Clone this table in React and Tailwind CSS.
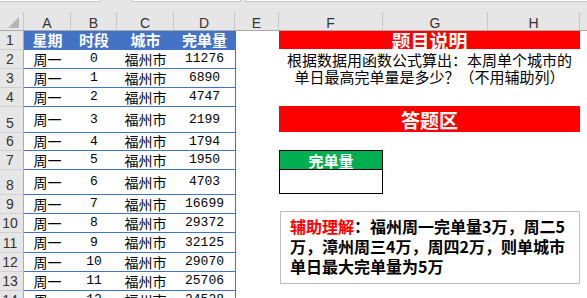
import React from 'react';

const cjk = "font-['Noto_Sans_CJK_SC',sans-serif]";

const rows = [
  ['0', '11276'],
  ['1', '6890'],
  ['2', '4747'],
  ['3', '2199'],
  ['4', '1794'],
  ['5', '1950'],
  ['6', '4703'],
  ['7', '16699'],
  ['8', '29372'],
  ['9', '32125'],
  ['10', '29070'],
  ['11', '25706'],
  ['12', '24528'],
];

// row heights for rows 2..14 (row 1 is the blue header)
const heights = ['h-[19px]', 'h-[19px]', 'h-[19px]', 'h-[26px]', 'h-[18px]', 'h-[19px]', 'h-[25px]', 'h-[19px]', 'h-[19px]', 'h-[20px]', 'h-[19px]', 'h-[19px]', 'h-[19px]'];

const cols = [
  { label: 'A', w: 'w-[47px]' },
  { label: 'B', w: 'w-[46px]' },
  { label: 'C', w: 'w-[57px]' },
  { label: 'D', w: 'w-[61px]' },
  { label: 'E', w: 'w-[44px]' },
  { label: 'F', w: 'w-[104px]' },
  { label: 'G', w: 'w-[105px]' },
  { label: 'H', w: 'w-[92px]' },
];

const ColHead = ({ label, w }) => (
  <div className={`${w} flex items-end`}>
    <div className="flex-1 text-center text-[14px] leading-[14px] text-[#333]">{label}</div>
    <div className="w-px h-[18px] bg-[#c9c9c9]"></div>
  </div>
);

const RowNum = ({ n, h, first }) => (
  <div className={`w-[24px] ${h} flex items-end justify-center pb-[2px] pr-[3px] bg-[#e6e6e6] border-r border-[#ababab] ${first ? '' : 'border-t border-t-[#cfcfcf]'} text-[14px] leading-[14px] text-[#333]`}>
    {n}
  </div>
);

export default function App() {
  return (
    <div className="w-[587px] h-[298px] overflow-hidden bg-white font-['Liberation_Sans',sans-serif]">
      {/* toolbar strip */}
      <div className="h-[4px] bg-[#e6e6e6] flex">
        <div className="w-[101px] h-[2px] bg-white border-r border-b border-[#c6c6c6]"></div>
        <div className="w-[31px]"></div>
        <div className="w-[109px] h-[2px] bg-white border-x border-b border-[#c6c6c6]"></div>
        <div className="w-[4px]"></div>
        <div className="flex-1 h-[2px] bg-white border-l border-b border-[#c6c6c6]"></div>
      </div>

      {/* column header */}
      <div className="h-[27px] flex bg-[#e6e6e6] border-b border-[#ababab]">
        <div className="w-[24px] flex items-end">
          <div className="flex-1 h-full flex items-end justify-end pr-[4px] pb-[2px]">
            <svg width="11" height="11" viewBox="0 0 11 11">
              <polygon points="11,0 11,11 0,11" fill="#b4b4b4" />
            </svg>
          </div>
          <div className="w-px h-[18px] bg-[#c9c9c9]"></div>
        </div>
        {cols.map((c) => (
          <ColHead key={c.label} {...c} />
        ))}
      </div>

      <div className="flex">
        {/* data table */}
        <div className="flex flex-col">
          <div className="flex h-[18px]">
            <RowNum n="1" h="h-[18px]" first />
            <div className={`flex bg-[#4472c4] text-white font-bold text-[15px] ${cjk}`}>
              <div className="w-[47px] flex items-center justify-center">星期</div>
              <div className="w-[46px] flex items-center justify-center">时段</div>
              <div className="w-[57px] flex items-center justify-center">城市</div>
              <div className="w-[62px] flex items-center justify-center pr-px">完单量</div>
            </div>
          </div>
          {rows.map(([t, v], i) => (
            <div key={i} className={`flex ${heights[i]}`}>
              <RowNum n={String(i + 2)} h={heights[i]} />
              <div className="flex border-t border-[#4472c4] text-[14px] text-black">
                <div className={`w-[47px] flex items-center justify-center ${cjk}`}>周一</div>
                <div className="w-[46px] flex items-center justify-center font-['Liberation_Mono',monospace] text-[13px]">{t}</div>
                <div className={`w-[57px] flex items-center justify-center ${cjk}`}>福州市</div>
                <div className="w-[62px] flex items-center justify-center font-['Liberation_Mono',monospace] text-[13px] border-r border-[#4472c4]">{v}</div>
              </div>
            </div>
          ))}
        </div>

        {/* right side */}
        <div className="grid grid-cols-[43px_104px_105px_92px_8px] grid-rows-[18px_19px_19px_19px_26px_18px_19px_25px_19px_19px_20px_19px_19px_19px]">
          <div className={`col-start-2 col-span-3 row-start-1 bg-[#ff0000] text-white font-bold text-[19px] leading-none flex items-center justify-center ${cjk}`}>
            题目说明
          </div>
          <div className={`col-start-2 col-span-3 row-start-2 row-span-2 flex items-center justify-center text-center text-[15px] leading-[17px] text-black ${cjk}`}>
            <div>
              根据数据用函数公式算出：本周单个城市的
              <br />
              单日最高完单量是多少？（不用辅助列）
            </div>
          </div>
          <div className={`col-start-2 col-span-3 row-start-5 bg-[#ff0000] text-white font-bold text-[19px] leading-none flex items-center justify-center ${cjk}`}>
            答题区
          </div>
          <div className={`col-start-2 row-start-7 bg-[#00b050] border-x border-t border-black text-white font-bold text-[15px] leading-none flex items-center justify-center ${cjk}`}>
            完单量
          </div>
          <div className="col-start-2 row-start-8 bg-white border border-black"></div>
          <div className={`col-start-2 col-span-3 row-start-10 row-span-4 self-start -mt-[2px] ml-px h-[73px] border border-[#bfbfbf] pl-[9px] pt-[4px] text-[16px] leading-[20px] font-bold text-black ${cjk}`}>
            <span className="text-[#ff0000]">辅助理解</span>：福州周一完单量3万，周二5
            <br />
            万，漳州周三4万，周四2万，则单城市
            <br />
            单日最大完单量为5万
          </div>
        </div>
      </div>
    </div>
  );
}
